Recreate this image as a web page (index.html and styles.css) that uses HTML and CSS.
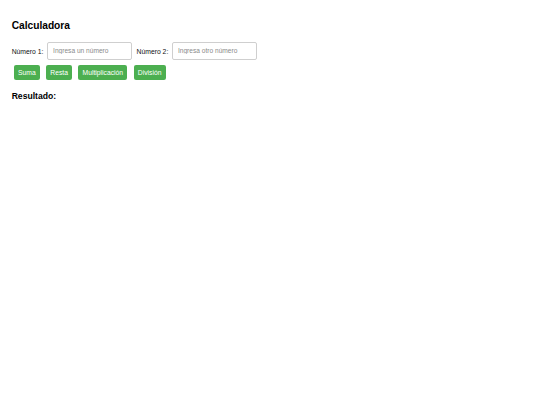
FILE: index.html
```html
<!DOCTYPE html>
<html lang="es">
<head>
<meta charset="utf-8">
<title>Calculadora</title>
<link rel="stylesheet" href="styles.css">
</head>
<body>
<h2 class="title">Calculadora</h2>
<div class="row">
<label class="lbl" for="num1">Número 1:</label>
<input class="field" type="number" id="num1" placeholder="Ingresa un número">
<label class="lbl" for="num2">Número 2:</label>
<input class="field" type="number" id="num2" placeholder="Ingresa otro número">
</div>
<div class="row">
<button class="btn">Suma</button>
<button class="btn">Resta</button>
<button class="btn">Multiplicación</button>
<button class="btn">División</button>
</div>
<h3 class="result">Resultado: <span id="resultado"></span></h3>
</body>
</html>
```

FILE: styles.css
```css
html, body {
  background: #ffffff;
}
body {
  margin: 0;
  padding: 11.67px;
  font-family: "Liberation Sans", Arial, sans-serif;
  font-size: 6.8px;
  color: #000;
}
.title {
  font-size: 10.2px;
  font-weight: bold;
  margin: 8.6px 0 8.3px;
}
.row {
  line-height: normal;
}
.lbl {
  font-size: 6.8px;
  color: #111;
}
.field {
  box-sizing: border-box;
  width: 85px;
  height: 18.5px;
  margin: 2.2px;
  padding: 0 4.6px;
  font-family: "Liberation Sans", Arial, sans-serif;
  font-size: 6.6px;
  border: 1px solid #cfcfcf;
  border-radius: 2px;
  outline: none;
  vertical-align: baseline;
  color: #000;
}
.field::placeholder {
  color: #8a8a8a;
}
.field::-webkit-outer-spin-button,
.field::-webkit-inner-spin-button {
  -webkit-appearance: none;
  margin: 0;
}
.btn {
  margin: 2.3px 2.2px;
  padding: 4.3px 4.2px;
  font-family: "Liberation Sans", Arial, sans-serif;
  font-size: 6.75px;
  line-height: normal;
  background: #4caf50;
  color: #ffffff;
  border: none;
  border-radius: 2.08px;
  cursor: pointer;
}
.result {
  font-size: 8.6px;
  font-weight: bold;
  margin: 8px 0;
}
```
